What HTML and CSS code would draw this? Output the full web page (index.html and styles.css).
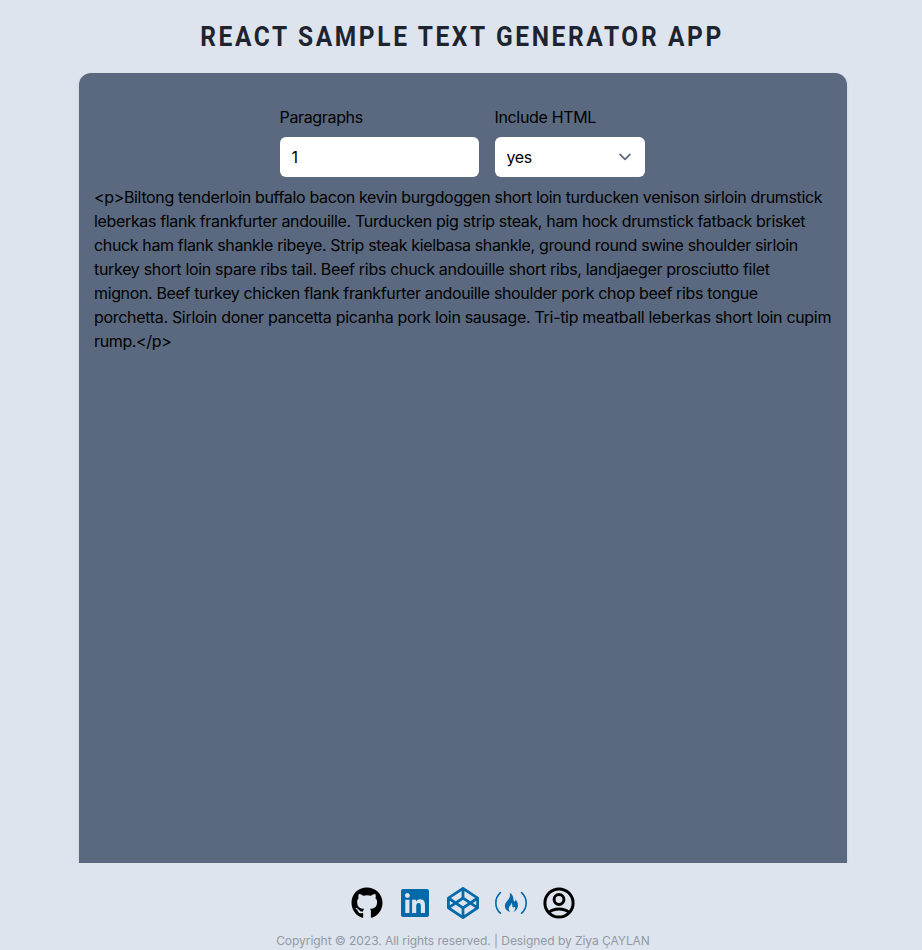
FILE: index.html
```html
<!DOCTYPE html>
<html lang="en">
<head>
<meta charset="utf-8">
<title>React Sample Text Generator App</title>
<link rel="stylesheet" href="styles.css">
</head>
<body>
<h1 class="title">REACT SAMPLE TEXT GENERATOR APP</h1>
<main class="card">
  <form class="controls">
    <label class="field field-count"><span>Paragraphs</span><input class="control" type="text" value="1"></label>
    <label class="field field-html"><span>Include HTML</span>
      <span class="control select">yes
        <svg width="14" height="8" viewBox="0 0 14 8"><path d="M2 1.3l5 5 5-5" fill="none" stroke="#5f6878" stroke-width="1.7" stroke-linecap="round" stroke-linejoin="round"/></svg>
      </span>
    </label>
  </form>
  <p class="output">&lt;p&gt;Biltong tenderloin buffalo bacon kevin burgdoggen short loin turducken venison sirloin drumstick<br>leberkas flank frankfurter andouille. Turducken pig strip steak, ham hock drumstick fatback brisket<br><span class="tight">chuck ham flank shankle ribeye. Strip steak kielbasa shankle, ground round swine shoulder sirloin</span><br><span class="loose">turkey short loin spare ribs tail. Beef ribs chuck andouille short ribs, landjaeger prosciutto filet</span><br><span class="tight">mignon. Beef turkey chicken flank frankfurter andouille shoulder pork chop beef ribs tongue</span><br><span class="loose">porchetta. Sirloin doner pancetta picanha pork loin sausage. Tri-tip meatball leberkas short loin cupim</span><br><span class="tight">rump.&lt;/p&gt;</span></p>
</main>
<footer class="footer">
  <nav class="links">
    <svg class="icon" viewBox="0 0 496 512"><path d="M165.9 397.4c0 2-2.3 3.6-5.2 3.6-3.3.3-5.6-1.3-5.6-3.6 0-2 2.3-3.6 5.2-3.6 3-.3 5.6 1.3 5.6 3.6zm-31.1-4.5c-.7 2 1.3 4.3 4.3 4.9 2.6 1 5.6 0 6.2-2s-1.3-4.3-4.3-5.2c-2.6-.7-5.5.3-6.2 2.3zm44.2-1.7c-2.9.7-4.9 2.6-4.6 4.9.3 2 2.9 3.3 5.9 2.6 2.9-.7 4.9-2.6 4.6-4.6-.3-1.9-3-3.2-5.9-2.9zM244.8 8C106.1 8 0 113.3 0 252c0 110.9 69.8 205.8 169.5 239.2 12.8 2.3 17.3-5.6 17.3-12.1 0-6.2-.3-40.4-.3-61.4 0 0-70 15-84.7-29.8 0 0-11.4-29.1-27.8-36.6 0 0-22.9-15.7 1.6-15.4 0 0 24.9 2 38.6 25.8 21.9 38.6 58.6 27.5 72.9 20.9 2.3-16 8.8-27.1 16-33.7-55.9-6.2-112.3-14.3-112.3-110.5 0-27.5 7.6-41.3 23.6-58.9-2.6-6.5-11.1-33.3 2.6-67.9 20.9-6.5 69 27 69 27 20-5.6 41.5-8.5 62.8-8.5s42.8 2.9 62.8 8.5c0 0 48.1-33.6 69-27 13.7 34.7 5.2 61.4 2.6 67.9 16 17.7 25.8 31.5 25.8 58.9 0 96.5-58.9 104.2-114.8 110.5 9.2 7.9 17 22.9 17 46.4 0 33.7-.3 75.4-.3 83.6 0 6.5 4.6 14.4 17.3 12.1C428.2 457.8 496 362.9 496 252 496 113.3 383.5 8 244.8 8zM97.2 352.9c-1.3 1-1 3.3.7 5.2 1.6 1.6 3.9 2.3 5.2 1 1.3-1 1-3.3-.7-5.2-1.6-1.6-3.9-2.3-5.2-1z"/></svg>
    <svg class="icon blue" viewBox="0 0 448 512"><path d="M416 32H31.9C14.3 32 0 46.5 0 64.3v383.4C0 465.5 14.3 480 31.9 480H416c17.6 0 32-14.5 32-32.3V64.3c0-17.8-14.4-32.3-32-32.3zM135.4 416H69V202.2h66.5V416zm-33.2-243c-21.3 0-38.5-17.3-38.5-38.5S80.9 96 102.2 96c21.2 0 38.5 17.3 38.5 38.5 0 21.3-17.2 38.5-38.5 38.5zm282.1 243h-66.4V312c0-24.8-.5-56.7-34.5-56.7-34.6 0-39.9 27-39.9 54.9V416h-66.4V202.2h63.7v29.2h.9c8.9-16.8 30.6-34.5 62.9-34.5 67.2 0 79.7 44.3 79.7 101.9V416z"/></svg>
    <svg class="icon blue" viewBox="0 0 512 512"><path d="M502.285 159.704l-234-156c-7.987-4.915-16.511-4.96-24.571 0l-234 156C3.714 163.703 0 170.847 0 177.989v155.999c0 7.143 3.714 14.286 9.715 18.286l234 156.022c7.987 4.915 16.511 4.96 24.571 0l234-156.022c6-3.999 9.715-11.143 9.715-18.286V177.989c-.001-7.142-3.715-14.286-9.716-18.285zM278 63.131l172.286 114.858-76.857 51.429L278 165.703V63.131zm-44 0v102.572l-95.429 63.715-76.857-51.429L234 63.131zM44 219.132l55.143 36.857L44 292.847v-73.715zm190 229.715L61.714 333.989l76.857-51.429L234 346.275v102.572zm22-140.858l-77.715-52 77.715-52 77.715 52-77.715 52zm22 140.858V346.275l95.429-63.715 76.857 51.429L278 448.847zm190-156l-55.143-36.857L468 219.132v73.715z"/></svg>
    <svg class="icon blue" viewBox="0 0 32 32"><path d="M5.400 5.600C-.7 11.200-.7 20.600 5.400 26.200M26.600 5.600c6.100 5.600 6.100 15 0 20.600" fill="none" stroke="currentColor" stroke-width="1.600" stroke-linecap="round"/><path d="M14.800 5.800c2.200 1.200 3.300 3.300 3.600 5.600.3 1.700.3 3 1.100 3 1 0 1.200-1.100.7-2.200 2.100 2 3 4.300 2.700 6.900-.3 3-2 4.900-4.600 6 1.900-2 2.600-3.900 1.300-5.600-.4 1-1.200 1.200-1.900.6-1-.8.2-2.500-1.200-4.300 0 2.300-2.300 3.100-2.700 5.200-.3 1.600.3 2.900 1.500 4.100-3.600-1-5.700-3.600-5.400-6.700.4-4 5.200-5.900 5.100-10.500 0-.8-.1-1.500-.2-2.100z"/></svg>
    <svg class="icon" viewBox="0 0 32 32"><g fill="none" stroke="currentColor" stroke-width="3"><circle cx="16" cy="16" r="14.100"/><circle cx="16" cy="12.500" r="4.900"/><path d="M6 25.300c2.500-2 6-3.200 10-3.200s7.500 1.200 10 3.200"/></g></svg>
  </nav>
  <p class="copyright">Copyright © 2023. All rights reserved. | Designed by Ziya ÇAYLAN</p>
</footer>
</body>
</html>
```
FILE: styles.css
```css
* { box-sizing: border-box; }
body {
  margin: 0;
  height: 950px;
  overflow: hidden;
  display: flex;
  flex-direction: column;
  align-items: center;
  background: #dee4ee;
  color: #000;
  font: 16px/24px Inter, sans-serif;
  letter-spacing: -0.34px;
}
.title {
  margin: 0;
  height: 73px;
  padding-left: 3px;
  font: bold 28px/73px Roboto, sans-serif;
  letter-spacing: 3px;
  color: #1d2430;
  white-space: nowrap;
  transform: scaleX(.875);
}
.card {
  width: 768px;
  height: 790px;
  flex: none;
  margin-left: 4px;
  padding: 32px 17px 0 15px;
  background: #5a697f;
  border-radius: 12px 12px 0 0;
  box-shadow: 0 1px 3px rgba(0, 0, 0, .1);
}
.controls { display: flex; justify-content: center; gap: 16px; }
.field { display: flex; flex-direction: column; gap: 8px; }
.field-count { width: 199px; }
.field-html { width: 150px; }
.control {
  display: flex;
  align-items: center;
  width: 100%;
  height: 40px;
  padding: 0 12px;
  border: 0;
  border-radius: 6px;
  background: #fff;
  color: #000;
  font: inherit;
  letter-spacing: inherit;
}
.select { justify-content: space-between; padding-right: 13px; }
.output { margin: 8px 0 0; white-space: nowrap; }
.tight { letter-spacing: -0.36px; }
.loose { letter-spacing: -0.31px; }
.footer {
  position: relative;
  width: 100%;
  padding: 24px 0 0 4px;
  background: #dee4ee;
  text-align: center;
}
.links { display: flex; justify-content: center; gap: 16px; }
.icon { width: 32px; height: 32px; fill: currentColor; }
.blue { color: #0369a9; }
.copyright {
  margin: 14px 0 0;
  font-size: 12px;
  line-height: 16px;
  letter-spacing: -0.05px;
  color: #9298a3;
}
```
